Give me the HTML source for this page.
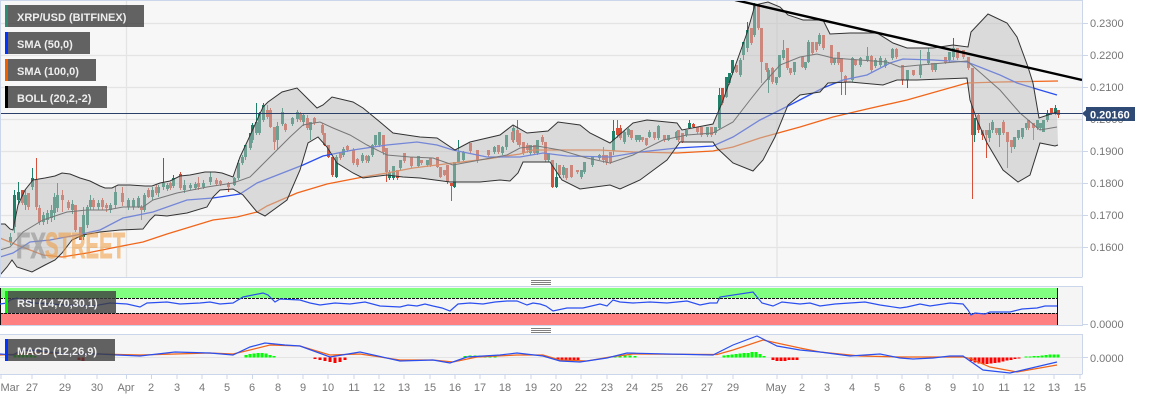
<!DOCTYPE html>
<html><head><meta charset="utf-8"><title>XRP/USD</title>
<style>
html,body{margin:0;padding:0;background:#fff;width:1153px;height:400px;overflow:hidden}
svg{display:block;font-family:"Liberation Sans",sans-serif;filter:blur(.3px)}
.ax{font-size:11px;fill:#777}
.lb{font-size:11px;font-weight:bold;fill:#eee}
</style></head><body>
<svg width="1153" height="400" viewBox="0 0 1153 400" xmlns="http://www.w3.org/2000/svg">
<defs><clipPath id="m"><rect x="0" y="1" width="1082" height="276"/></clipPath></defs>
<rect width="1153" height="400" fill="#fff"/>
<!-- main panel -->
<rect x="0" y="0" width="1082" height="277" fill="#f7f7f7"/>
<path d="M0 23.500H1082M0 55.500H1082M0 87.500H1082M0 119.500H1082M0 151.500H1082M0 183.500H1082M0 215.500H1082M0 247.500H1082M126.500 0V277M777 0V277" stroke="#e4e4e4" stroke-width="1.3" fill="none"/>
<g clip-path="url(#m)">
<!-- green wicks -->
<path fill="none" stroke="#1f8069" stroke-width="1" d="M10.5 233V245M14.5 190V233M18.5 182V205M25.5 190V210M32.5 168V190M43.5 212V225M47.5 210V224M51.5 205V222M54.5 193V220M57.5 183V212M72.5 200V214M83.5 207V240M87.5 205V228M90.5 195V210M98.5 200V210M110.5 203V213M115.5 187V208M128.5 198V210M133.5 198V210M138.5 196V208M144.5 193V212M152.5 187V200M158.5 185V197M163.5 158V190M167.5 183V191M173.5 175V188M184.5 180V193M190.5 183V190M195.5 182V190M203.5 180V189M210.5 172V185M234.5 177V186M238.5 160V180M242.5 155V165M245.5 145V160M250.5 133V150M252.5 123V143M256.5 103V135M259.5 112V135M263.5 103V122M277.5 122V150M282.5 108V126M292.5 117V126M297.5 110V122M303.5 113V126M310.5 122V140M336.5 155V178M343.5 147V157M362.5 153V163M368.5 155V163M372.5 144V157M375.5 135V147M379.5 132V147M389.5 170V180M393.5 166V180M400.5 160V170M418.5 156V168M427.5 160V167M454.5 162V188M458.5 140V163M463.5 151V161M494.5 146V154M502.5 146V155M506.5 135V150M513.5 125V143M530.5 145V155M537.5 140V155M548.5 153V162M556.5 163V188M563.5 165V178M581.5 170V179M584.5 162V174M592.5 157V167M599.5 154V160M613.5 120V155M624.5 130V144M628.5 128V137M636.5 135V142M639.5 135V142M649.5 130V138M658.5 125V140M668.5 135V141M676.5 131V140M686.5 130V137M689.5 120V129M707.5 127V137M715.5 127V135M719.5 88V130M726.5 77V98M729.5 73V85M732.5 60V75M740.5 58V77M743.5 42V60M747.5 22V52M754.5 3V37M768.5 68V93M776.5 77V85M779.5 55V78M783.5 40V60M794.5 62V75M805.5 62V70M808.5 40V63M819.5 33V46M834.5 58V65M852.5 57V82M860.5 57V67M867.5 47V62M875.5 58V68M880.5 56V67M885.5 58V68M892.5 48V60M907.5 70V88M920.5 50V78M928.5 48V65M935.5 63V72M949.5 52V62M953.5 38V60M974.5 118V142M989.5 123V142M992.5 120V133M999.5 128V147M1014.5 137V149M1018.5 130V140M1022.5 128V139M1026.5 123V130M1037.5 120V130M1040.5 123V130M1043.5 120V132M1047.5 110V122M1055.5 105V115"/>
<!-- green bodies -->
<path fill="none" stroke="#1f8069" stroke-width="3" d="M10.5 237V242M14.5 195V227M18.5 192V200M25.5 195V205M32.5 178V187M43.5 215V222M47.5 213V220M51.5 210V218M54.5 197V213M57.5 195V208M72.5 204V210M83.5 215V237M87.5 207V225M90.5 200V207M98.5 203V207M110.5 205V210M115.5 192V205M128.5 200V207M133.5 200V207M138.5 198V207M144.5 195V210M152.5 190V197M158.5 187V193M163.5 183V187M167.5 185V189M173.5 178V186M184.5 185V190M190.5 185V188M195.5 184V188M203.5 183V187M210.5 177V182M234.5 178V185M238.5 163V178M242.5 157V163M245.5 145V157M250.5 133V148M252.5 125V140M256.5 122V133M259.5 113V133M263.5 105V120M277.5 126V140M282.5 112V124M292.5 118V124M297.5 112V119M303.5 115V122M310.5 122V130M336.5 157V177M343.5 149V155M362.5 155V161M368.5 156V161M372.5 145V155M375.5 135V145M379.5 132V145M389.5 172V178M393.5 166V178M400.5 160V168M418.5 156V166M427.5 160V165M454.5 162V187M458.5 152V162M463.5 152V160M494.5 147V152M502.5 147V153M506.5 135V147M513.5 128V140M530.5 145V153M537.5 140V153M548.5 153V160M556.5 177V187M563.5 167V175M581.5 170V177M584.5 162V172M592.5 157V165M599.5 155V158M613.5 131V151M624.5 132V142M628.5 129V135M636.5 135V140M639.5 135V140M649.5 132V137M658.5 126V138M668.5 135V140M676.5 132V138M686.5 130V135M689.5 123V128M707.5 127V135M715.5 127V133M719.5 95V128M726.5 77V97M729.5 73V83M732.5 60V73M740.5 60V75M743.5 42V55M747.5 30V48M754.5 5V35M768.5 70V80M776.5 77V83M779.5 55V77M783.5 50V58M794.5 62V72M805.5 62V68M808.5 42V62M819.5 35V44M834.5 58V63M852.5 58V80M860.5 58V65M867.5 56V60M875.5 60V66M880.5 58V65M885.5 60V66M892.5 49V58M907.5 70V80M920.5 65V75M928.5 52V63M935.5 63V70M949.5 52V60M953.5 48V57M974.5 118V135M989.5 130V138M992.5 122V130M999.5 128V135M1014.5 137V147M1018.5 130V138M1022.5 128V137M1026.5 123V128M1037.5 120V128M1040.5 123V128M1043.5 120V132M1047.5 113V120M1055.5 108V113"/>
<!-- red wicks -->
<path fill="none" stroke="#d9503a" stroke-width="1" d="M22.5 190V205M28.5 193V210M36.5 158V210M39.5 205V225M62.5 190V212M68.5 200V210M75.5 205V232M80.5 227V240M93.5 198V210M102.5 198V210M106.5 203V212M122.5 187V206M141.5 205V220M148.5 188V198M156.5 185V195M170.5 182V190M180.5 172V190M198.5 177V190M216.5 178V186M220.5 180V186M228.5 182V192M267.5 105V119M270.5 108V128M274.5 127V150M285.5 123V132M300.5 112V122M307.5 115V130M314.5 117V125M322.5 123V135M324.5 133V146M328.5 145V158M332.5 157V177M340.5 152V160M347.5 145V152M353.5 148V165M357.5 158V167M366.5 155V163M383.5 135V155M386.5 148V182M397.5 170V180M404.5 153V163M411.5 157V168M421.5 160V165M430.5 158V167M437.5 157V168M440.5 167V178M444.5 170V176M447.5 165V184M451.5 183V201M470.5 143V153M477.5 150V163M488.5 150V157M498.5 145V154M512.5 131V142M517.5 120V145M519.5 133V147M523.5 142V155M527.5 143V153M534.5 145V155M542.5 135V145M545.5 142V162M552.5 160V188M559.5 165V178M566.5 168V180M571.5 165V178M577.5 170V174M603.5 147V163M606.5 155V165M610.5 152V164M617.5 120V138M620.5 125V140M631.5 130V140M642.5 137V142M646.5 138V146M654.5 132V140M664.5 135V142M678.5 130V142M682.5 133V143M693.5 123V128M697.5 127V134M701.5 127V137M711.5 127V137M722.5 88V105M736.5 65V73M751.5 28V45M758.5 5V30M761.5 28V83M766.5 63V72M772.5 67V84M787.5 48V70M790.5 68V75M802.5 57V68M812.5 42V55M816.5 42V52M823.5 35V50M831.5 45V65M838.5 52V65M841.5 58V95M845.5 75V95M855.5 60V66M871.5 55V72M896.5 48V59M902.5 65V85M913.5 70V76M932.5 63V72M945.5 57V64M957.5 48V60M963.5 50V59M968.5 57V70M972.5 68V199M978.5 113V133M982.5 130V140M986.5 130V158M996.5 128V135M1003.5 120V135M1007.5 132V168M1011.5 140V153M1028.5 120V130M1033.5 123V140M1051.5 108V115M1058.5 110V118"/>
<!-- red bodies -->
<path fill="none" stroke="#d9503a" stroke-width="3" d="M22.5 190V203M28.5 193V207M36.5 180V207M39.5 208V222M62.5 195V200M68.5 202V208M75.5 205V230M80.5 227V240M93.5 200V207M102.5 200V207M106.5 205V208M122.5 193V202M141.5 207V210M148.5 190V197M156.5 187V193M170.5 183V188M180.5 174V188M198.5 183V187M216.5 180V184M220.5 181V184M228.5 183V187M267.5 110V117M270.5 110V127M274.5 127V142M285.5 124V130M300.5 113V120M307.5 118V128M314.5 118V123M322.5 125V133M324.5 133V145M328.5 145V157M332.5 157V175M340.5 153V158M347.5 146V150M353.5 150V163M357.5 159V165M366.5 156V160M383.5 135V152M386.5 148V172M397.5 170V178M404.5 153V161M411.5 157V166M421.5 160V163M430.5 158V165M437.5 157V167M440.5 167V177M444.5 170V175M447.5 165V182M451.5 183V186M470.5 143V151M477.5 150V160M488.5 150V155M498.5 145V152M512.5 132V140M517.5 130V142M519.5 133V145M523.5 142V153M527.5 145V150M534.5 145V153M542.5 137V142M545.5 142V160M552.5 160V187M559.5 165V175M566.5 168V178M571.5 165V177M577.5 170V172M603.5 155V160M606.5 155V162M610.5 152V162M617.5 128V135M620.5 128V138M631.5 130V138M642.5 137V140M646.5 138V145M654.5 132V138M664.5 135V140M678.5 130V140M682.5 133V142M693.5 124V127M697.5 127V132M701.5 127V135M711.5 127V135M722.5 88V103M736.5 65V72M751.5 28V43M758.5 5V28M761.5 28V62M766.5 63V70M772.5 68V82M787.5 48V68M790.5 68V73M802.5 57V67M812.5 42V53M816.5 42V50M823.5 35V48M831.5 45V63M838.5 52V63M841.5 58V72M845.5 76V82M855.5 60V65M871.5 56V70M896.5 49V57M902.5 65V80M913.5 70V75M932.5 63V70M945.5 57V63M957.5 48V58M963.5 50V57M968.5 57V68M972.5 68V135M978.5 115V130M982.5 130V135M986.5 130V135M996.5 128V133M1003.5 122V133M1007.5 132V142M1011.5 140V147M1028.5 120V128M1033.5 123V128M1051.5 108V113M1058.5 110V115"/>
<!-- SMA 100 -->
<polyline fill="none" stroke="#f0651a" stroke-width="1.3" points="0,238 17,245 43,255 62,257 87,253 117,247 143,242 167,234 213,220 237,217 257,212 267,206 297,193 327,184 363,177 387,173 413,168 453,163 487,159 520,154 533,150 567,150 600,150 633,152 677,153 713,151 733,147 760,138 800,127 833,117 867,109 907,100 967,83 1000,82 1058,81"/>
<!-- SMA 50 -->
<polyline fill="none" stroke="#2a4ff0" stroke-width="1.3" points="0,257 13,253 30,242 50,240 77,235 100,230 123,218 153,212 187,200 213,198 240,194 257,183 303,165 323,156 353,150 387,145 417,142 437,145 453,150 487,157 520,157 543,153 567,156 610,157 640,152 677,148 713,146 733,137 760,120 790,105 823,88 843,80 867,75 890,63 903,59 933,60 967,62 1000,75 1017,83 1040,90 1057,95"/>
<!-- band -->
<path fill="#bdbdbd" fill-opacity=".5" d="M0 224L5 224L10 229L13 230L18 205L25 190L33 180L45 178L55 176L62 173L70 174L80 178L90 181L100 186L105 188L112 188L118 185L130 185L145 186L152 186L160 183L170 181L180 176L190 175L205 172L215 172L222 173L233 177L240 157L248 140L263 107L268 102L282 92L297 88L307 98L317 108L323 105L332 97L353 102L363 108L380 122L393 133L420 137L437 138L455 150L470 142L500 135L513 125L527 133L548 131L558 122L580 125L590 133L610 143L633 123L647 120L677 123L682 130L713 124L722 103L733 72L747 33L755 5L768 2L780 7L788 15L803 20L823 20L830 34L850 33L877 33L893 43L907 48L933 48L953 45L968 47L971 32L988 14L1007 23L1017 37L1028 67L1033 83L1039 118L1057 112L1058 145L1055 146L1040 143L1030 175L1018 182L1003 170L987 143L977 120L970 100L967 78L917 80L897 80L883 85L850 82L828 83L820 92L800 95L788 105L775 137L763 160L753 171L733 163L717 148L713 142L680 142L667 160L640 180L620 189L610 185L580 189L562 180L550 162L523 162L518 173L510 181L500 180L480 182L450 182L420 178L403 177L387 175L363 178L353 173L337 163L327 147L318 137L308 143L300 170L287 200L265 216L257 212L243 195L233 189L220 190L213 197L207 207L187 213L167 216L155 215L150 220L143 229L120 230L100 232L83 235L72 240L62 253L55 260L45 265L32 272L17 267L12 260L7 267L0 275Z"/>
<polyline fill="none" stroke="#333" stroke-width="1" points="0,224 5,224 10,229 13,230 18,205 25,190 33,180 45,178 55,176 62,173 70,174 80,178 90,181 100,186 105,188 112,188 118,185 130,185 145,186 152,186 160,183 170,181 180,176 190,175 205,172 215,172 222,173 233,177 240,157 248,140 263,107 268,102 282,92 297,88 307,98 317,108 323,105 332,97 353,102 363,108 380,122 393,133 420,137 437,138 455,150 470,142 500,135 513,125 527,133 548,131 558,122 580,125 590,133 610,143 633,123 647,120 677,123 682,130 713,124 722,103 733,72 747,33 755,5 768,2 780,7 788,15 803,20 823,20 830,34 850,33 877,33 893,43 907,48 933,48 953,45 968,47 971,32 988,14 1007,23 1017,37 1028,67 1033,83 1039,118 1057,112"/>
<polyline fill="none" stroke="#333" stroke-width="1" points="0,275 7,267 12,260 17,267 32,272 45,265 55,260 62,253 72,240 83,235 100,232 120,230 143,229 150,220 155,215 167,216 187,213 207,207 213,197 220,190 233,189 243,195 257,212 265,216 287,200 300,170 308,143 318,137 327,147 337,163 353,173 363,178 387,175 403,177 420,178 450,182 480,182 500,180 510,181 518,173 523,162 550,162 562,180 580,189 610,185 620,189 640,180 667,160 680,142 713,142 717,148 733,163 753,171 763,160 775,137 788,105 800,95 820,92 828,83 850,82 883,85 897,80 917,80 967,78 970,100 977,120 987,143 1003,170 1018,182 1030,175 1040,143 1055,146 1058,145"/>
<polyline fill="none" stroke="#777" stroke-width="1" points="0,250 10,247 23,232 43,220 67,212 87,210 107,210 123,207 143,207 153,200 177,193 207,187 233,183 250,177 267,160 270,157 290,137 303,125 320,122 333,128 350,135 367,145 387,155 410,157 433,158 453,165 480,160 507,155 520,148 537,146 560,150 587,158 610,163 633,155 663,140 687,135 713,133 733,122 750,100 762,85 780,65 800,57 817,54 833,58 860,60 887,62 900,67 920,65 967,61 983,75 1000,90 1020,113 1040,130 1057,127"/>
<!-- watermark -->
<text x="16" y="258" font-size="36" font-weight="bold" fill="#8c8c8c" stroke="#8c8c8c" stroke-width=".9" opacity=".55" textLength="30" lengthAdjust="spacingAndGlyphs">FX</text>
<text x="45" y="258" font-size="36" font-weight="bold" fill="#f09a3c" stroke="#f09a3c" stroke-width=".9" opacity=".55" textLength="80" lengthAdjust="spacingAndGlyphs">STREET</text>
<!-- trend -->
<path d="M735 0L1082 80" stroke="#000" stroke-width="2.4" fill="none"/>
</g>
<!-- price line -->
<path d="M0 113.500H1086" stroke="#2b3f6b" stroke-width="1"/>
<!-- panel borders -->
<path d="M0 .5H1082.500M.5 0V277M1082.500 0V277M0 277.500H1082.500" stroke="#ccd6eb" stroke-width="1" fill="none"/>
<!-- handles -->
<path d="M531 280.500H551M531 282.500H551M531 284.500H551M531 328.500H551M531 330.500H551M531 332.500H551" stroke="#808080" stroke-width="1"/>
<!-- RSI -->
<rect x="0" y="286" width="1082" height="40" fill="#f5f5f5"/>
<rect x="1" y="288" width="1056" height="10" fill="#80ff80"/>
<rect x="1" y="313" width="1056" height="12" fill="#ff8080"/>
<path d="M0 298.500H1057M0 313.500H1057" stroke="#111" stroke-width="1" stroke-dasharray="3 1"/>
<path d="M.5 288V325M1057.500 288V325" stroke="#111" stroke-width="1"/>
<polyline fill="none" stroke="#2a4ff0" stroke-width="1.2" points="0,304 7,303 10,300 17,298 22,300 33,303 67,305 93,306 110,303 127,304 140,307 147,303 167,302 180,304 200,303 210,302 220,304 233,303 243,297 263,293 268,295 275,302 280,299 300,300 310,303 320,305 335,303 350,304 365,302 380,306 400,307 408,305 417,306 425,304 433,306 442,308 450,311 458,304 470,303 483,304 495,302 507,301 517,301 527,305 533,303 540,304 546,306 553,311 567,308 583,308 600,304 607,306 613,300 620,302 633,303 650,302 667,303 687,301 700,305 710,303 717,303 720,297 753,292 762,303 773,306 782,302 800,304 810,303 820,306 835,304 850,303 865,302 880,305 900,308 907,307 920,304 930,306 950,303 963,304 968,310 971,315 975,313 985,314 990,312 1010,312 1022,309 1037,308 1045,306 1057,306"/>
<path d="M0 286.500H1082.500M1082.500 286V326M0 325.500H1082.500" stroke="#ccd6eb" stroke-width="1" fill="none"/>
<!-- MACD -->
<rect x="0" y="334" width="1082" height="40" fill="#f5f5f5"/>
<path d="M0 357.500H1082" stroke="#e4e4e4" stroke-width="1"/>
<path fill="none" stroke="#00ff00" stroke-width="3" d="M15 357.500V355M19 357.500V355M23 357.500V355M27 357.500V355M31 357.500V355M35 357.500V356M246 357.500V355M250 357.500V354M254 357.500V353.500M258 357.500V353M262 357.500V353M266 357.500V353.500M270 357.500V355M274 357.500V356M465 357.500V356M470 357.500V355.500M475 357.500V355.500M480 357.500V355.500M485 357.500V355.500M490 357.500V356M495 357.500V356M615 357.500V356M620 357.500V355.500M625 357.500V355M630 357.500V355.500M635 357.500V356M724 357.500V355.500M728 357.500V355M732 357.500V354.500M736 357.500V354M740 357.500V353.500M744 357.500V353M748 357.500V353M752 357.500V352M756 357.500V352M760 357.500V354M764 357.500V356M1026 357.500V356.500M1030 357.500V356.500M1034 357.500V356M1038 357.500V356M1042 357.500V355.500M1046 357.500V355M1050 357.500V354.500M1054 357.500V354.500M1058 357.500V354.500"/>
<path fill="none" stroke="#ff0000" stroke-width="3" d="M79 357.500V360M83 357.500V361M315 357.500V359M320 357.500V360M325 357.500V361M330 357.500V362M335 357.500V363M340 357.500V362M345 357.500V360M558 357.500V360M562 357.500V361M566 357.500V361M570 357.500V361M574 357.500V360M578 357.500V360M773 357.500V360M777 357.500V361M781 357.500V361M785 357.500V361M789 357.500V360M793 357.500V360M797 357.500V360M971 357.500V361M975 357.500V362.500M979 357.500V363.500M983 357.500V364M987 357.500V364M991 357.500V363.500M995 357.500V363M999 357.500V362.500M1003 357.500V361.500M1007 357.500V360.500M1011 357.500V360M1015 357.500V359M1019 357.500V358.500"/>
<polyline fill="none" stroke="#f0651a" stroke-width="1.2" points="0,355 20,354 40,353 67,354 100,354 140,355 175,354 210,353 233,354 250,350 270,345 300,346 330,355 360,354 400,360 433,360 453,362 477,357 517,355 543,355 560,360 587,361 610,357 633,354 717,354.500 733,350 763,340 800,348 820,352 860,356 900,357 963,357 970,358.500 990,367 1017,372 1057,365"/>
<polyline fill="none" stroke="#2a4ff0" stroke-width="1.2" points="0,354 13,355 20,351 30,350 67,354 100,354 117,355 140,356 175,352 210,353 233,355 250,347 265,343 285,345 300,346 330,357 360,352 400,361 433,360 450,363 467,357 500,355 517,353 543,356 560,361 580,362 607,358 627,353 667,354 713,355 733,345 757,336 777,346 800,350 820,352 850,356 880,354 900,358 913,359 933,358 950,356 963,356 970,361 983,370 1010,373 1023,370 1057,362"/>
<path d="M0 334.500H1082.500M1082.500 334V374M0 374.500H1082.500" stroke="#ccd6eb" stroke-width="1" fill="none"/>
<!-- legend boxes -->
<rect x="5" y="5" width="139" height="22" fill="#3c3c3c" fill-opacity=".8"/><rect x="5" y="5" width="3" height="22" fill="#2e8b74"/>
<text class="lb" x="17" y="21">XRP/USD (BITFINEX)</text>
<rect x="5" y="32" width="85" height="22" fill="#3c3c3c" fill-opacity=".8"/><rect x="5" y="32" width="3" height="22" fill="#0033ff"/>
<text class="lb" x="17" y="48">SMA (50,0)</text>
<rect x="5" y="59" width="91" height="22" fill="#3c3c3c" fill-opacity=".8"/><rect x="5" y="59" width="3" height="22" fill="#f06000"/>
<text class="lb" x="17" y="75">SMA (100,0)</text>
<rect x="5" y="86" width="102" height="22" fill="#3c3c3c" fill-opacity=".8"/><rect x="5" y="86" width="3" height="22" fill="#000"/>
<text class="lb" x="17" y="102">BOLL (20,2,-2)</text>
<rect x="5" y="291" width="111" height="22" fill="#3c3c3c" fill-opacity=".8"/><rect x="5" y="291" width="3" height="22" fill="#00f000"/>
<text class="lb" x="17" y="307">RSI (14,70,30,1)</text>
<rect x="5" y="339" width="110" height="22" fill="#3c3c3c" fill-opacity=".8"/><rect x="5" y="339" width="3" height="22" fill="#0033ff"/>
<text class="lb" x="17" y="355">MACD (12,26,9)</text>
<!-- y axis -->
<path d="M1083 23.500H1088M1083 55.500H1088M1083 87.500H1088M1083 151.500H1088M1083 183.500H1088M1083 215.500H1088M1083 247.500H1088M1083 324.500H1088M1083 357.500H1088" stroke="#ccd6eb" stroke-width="1"/>
<text class="ax" x="1090" y="27">0.2300</text>
<text class="ax" x="1090" y="59">0.2200</text>
<text class="ax" x="1090" y="91">0.2100</text>
<text class="ax" x="1090" y="123">0.2000</text>
<text class="ax" x="1090" y="155">0.1900</text>
<text class="ax" x="1090" y="187">0.1800</text>
<text class="ax" x="1090" y="219">0.1700</text>
<text class="ax" x="1090" y="251">0.1600</text>
<text class="ax" x="1090" y="328">0.0000</text>
<text class="ax" x="1090" y="362">0.0000</text>
<!-- price tag -->
<path d="M1082 113.500L1086 110V107H1135V121H1086V117Z" fill="#2f4a74"/>
<text x="1090" y="118.500" font-size="11" font-weight="bold" fill="#fff">0.20160</text>
<!-- x axis -->
<path d="M1 375V379M32 375V379M65 375V379M97 375V379M126.500 375V379M151.500 375V379M177 375V379M202 375V379M227 375V379M252.500 375V379M278 375V379M303 375V379M328 375V379M354 375V379M379 375V379M404 375V379M430 375V379M455 375V379M480 375V379M505 375V379M531 375V379M556 375V379M581 375V379M607 375V379M632 375V379M657 375V379M682 375V379M707 375V379M733 375V379M777 375V379M802 375V379M827 375V379M852 375V379M877 375V379M902 375V379M928 375V379M953 375V379M978 375V379M1004 375V379M1029 375V379M1054 375V379M1080 375V379" stroke="#ccd6eb" stroke-width="1"/>
<g class="ax" text-anchor="middle">
<text x="10" y="391">Mar</text><text x="32" y="391">27</text><text x="65" y="391">29</text><text x="97" y="391">30</text><text x="126" y="391">Apr</text><text x="151" y="391">2</text><text x="177" y="391">3</text><text x="202" y="391">4</text><text x="227" y="391">5</text><text x="252" y="391">6</text><text x="278" y="391">8</text><text x="303" y="391">9</text><text x="328" y="391">10</text><text x="354" y="391">11</text><text x="379" y="391">12</text><text x="404" y="391">13</text><text x="430" y="391">15</text><text x="455" y="391">16</text><text x="480" y="391">17</text><text x="505" y="391">18</text><text x="531" y="391">19</text><text x="556" y="391">20</text><text x="581" y="391">22</text><text x="607" y="391">23</text><text x="632" y="391">24</text><text x="657" y="391">25</text><text x="682" y="391">26</text><text x="707" y="391">27</text><text x="733" y="391">29</text><text x="776" y="391">May</text><text x="802" y="391">2</text><text x="827" y="391">3</text><text x="852" y="391">4</text><text x="877" y="391">5</text><text x="902" y="391">6</text><text x="928" y="391">8</text><text x="953" y="391">9</text><text x="978" y="391">10</text><text x="1004" y="391">11</text><text x="1029" y="391">12</text><text x="1054" y="391">13</text><text x="1080" y="391">15</text>
</g>
</svg>
</body></html>
